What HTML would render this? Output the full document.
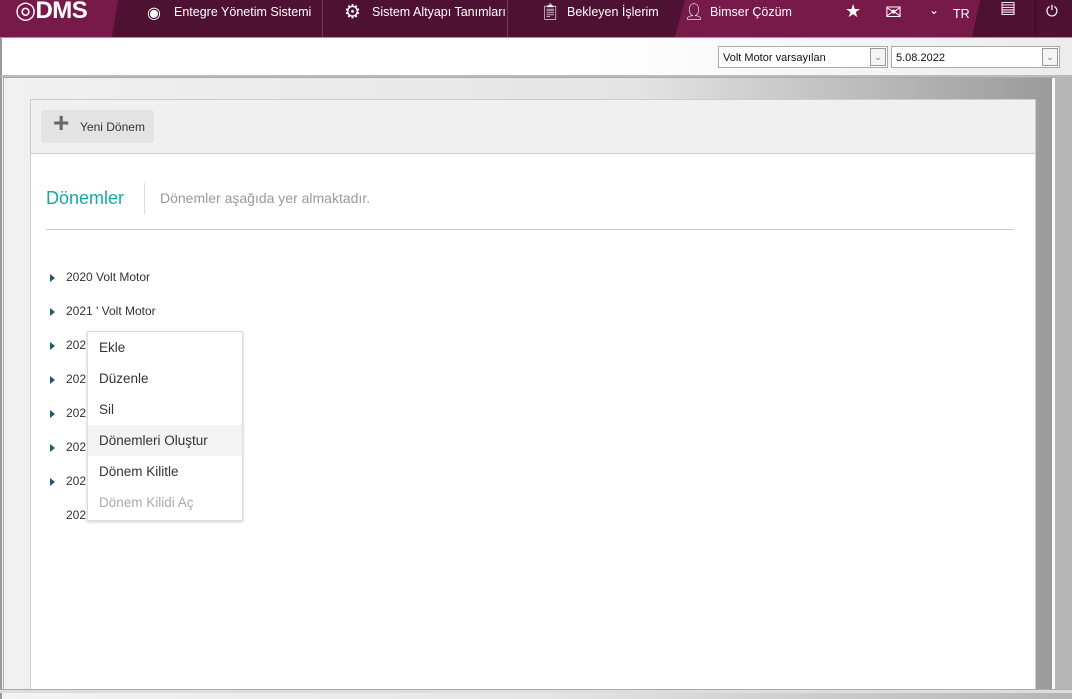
<!DOCTYPE html>
<html><head><meta charset="utf-8"><style>
*{margin:0;padding:0;box-sizing:border-box}
body{width:1072px;height:699px;overflow:hidden;font-family:"Liberation Sans","DejaVu Sans",sans-serif;background:#e9e9e9;position:relative}
.hdr{position:absolute;left:0;top:0;width:1072px;height:38px;background:#4e1131;border-bottom:1px solid #9a9a9a}
.abs{position:absolute}
.nav{position:absolute;top:5px;color:#fff;font-size:12.5px}
.sep{position:absolute;top:0;width:1px;height:37px;background:#6e3a55}
.sel{position:absolute;top:46px;height:22px;border:1px solid #aaa;background:#fff;font-size:11px;padding:5px 0 0 4px;color:#111}
.sel .b{position:absolute;right:1px;top:1px;width:16px;height:18px;border:1px solid #999;background:#f4f4f4;font-size:9px;color:#777;text-align:center;line-height:16px}
.tree{position:absolute;left:50px;font-size:12px;color:#333}
.tree i{display:inline-block;width:0;height:0;border-left:5px solid #1d5c6b;border-top:4.5px solid transparent;border-bottom:4.5px solid transparent;margin-right:11px;vertical-align:-1px}
.menu{position:absolute;left:87px;top:331px;width:156px;height:190px;background:#fff;border:1px solid #ddd;box-shadow:0 1px 3px rgba(0,0,0,.2)}
.menu div{height:31px;padding:8px 0 0 11px;font-size:13.5px;color:#333}
</style></head><body>
<div class="hdr">
 <div class="abs" style="left:0;top:0;width:118px;height:37px;background:#771a4a;clip-path:polygon(0 0,118px 0,112px 37px,0 37px)"></div>
 <div class="abs" style="left:675px;top:0;width:305px;height:37px;background:#771a4a;clip-path:polygon(10px 0,305px 0,297px 37px,0 37px)"></div>
 <div class="abs" style="left:15px;top:-4px;color:#fff;font-size:24px;font-weight:bold;letter-spacing:-0.5px">◎DMS</div>
 <div class="nav" style="left:147px;top:3px;font-size:16px;font-weight:bold">◉</div>
 <div class="nav" style="left:174px">Entegre Yönetim Sistemi</div>
 <div class="sep" style="left:322px"></div>
 <div class="nav" style="left:344px;top:1px;font-size:19px">⚙</div>
 <div class="nav" style="left:372px">Sistem Altyapı Tanımları</div>
 <div class="sep" style="left:507px"></div>
 <div class="nav" style="left:540px;top:2px;font-size:16px">📋︎</div>
 <div class="nav" style="left:567px">Bekleyen İşlerim</div>
 <div class="nav" style="left:684px;top:2px;font-size:16px">👤︎</div>
 <div class="nav" style="left:710px">Bimser Çözüm</div>
 <div class="nav" style="left:845px;top:1px;font-size:18px">★</div>
 <div class="nav" style="left:885px;top:0px;font-size:20px">✉</div>
 <div class="nav" style="left:929px;top:3px;font-size:12px">⌄</div>
 <div class="nav" style="left:953px;top:7px">TR</div>
 <div class="nav" style="left:1000px;top:-2px;font-size:17px">▤</div>
 <div class="sep" style="left:1035px;background:#3a0c24"></div>
 <div class="nav" style="left:1046px;top:3px;font-size:15px">⏻</div>
</div>
<div class="abs" style="left:0;top:38px;width:1072px;height:37px;background:linear-gradient(90deg,#fff 0,#fff 55%,#ececec 100%);border-left:2px solid #999"></div>
<div class="sel" style="left:718px;width:170px">Volt Motor varsayılan<span class="b">⌄</span></div>
<div class="sel" style="left:891px;width:169px">5.08.2022<span class="b">⌄</span></div>
<div class="abs" style="left:0;top:75px;width:1072px;height:624px;background:linear-gradient(90deg,#f3f3f3 0,#e6e6e6 50%,#b5b5b5 100%);border-top:2px solid #bbb;border-left:2px solid #999"></div>
<div class="abs" style="left:3px;top:77px;width:1052px;height:613px;border:1px solid #aaa;background:linear-gradient(90deg,#f1f1f1 0,#e4e4e4 60%,#9a9a9a 100%)"></div>
<div class="abs" style="left:1052px;top:78px;width:3px;height:612px;background:#fafafa"></div>
<div class="abs" style="left:0;top:689px;width:1072px;height:4px;background:#ddd;border-top:1px solid #aaa"></div>
<div class="abs" style="left:30px;top:99px;width:1006px;height:590px;background:#fff;border:1px solid #ccc;border-bottom:none">
 <div style="height:54px;background:#f0f0f0;border-bottom:1px solid #ccc;position:relative">
  <div class="abs" style="left:10px;top:10px;width:113px;height:33px;background:#e3e3e3;border-radius:3px">
   <span class="abs" style="left:12px;top:-3px;font-size:28px;color:#666;font-weight:bold">+</span>
   <span class="abs" style="left:39px;top:10px;font-size:12px;color:#333">Yeni Dönem</span>
  </div>
 </div>
 <div class="abs" style="left:15px;top:88px;font-size:18px;color:#17a9a9">Dönemler</div>
 <div class="abs" style="left:113px;top:83px;width:1px;height:31px;background:#ddd"></div>
 <div class="abs" style="left:129px;top:90px;font-size:14px;color:#999">Dönemler aşağıda yer almaktadır.</div>
 <div class="abs" style="left:15px;top:129px;width:968px;height:1px;background:#ccc"></div>
</div>
<div class="tree" style="top:270px"><i></i>2020 Volt Motor</div>
<div class="tree" style="top:304px"><i></i>2021 ' Volt Motor</div>
<div class="tree" style="top:338px"><i></i>202</div>
<div class="tree" style="top:372px"><i></i>202</div>
<div class="tree" style="top:406px"><i></i>202</div>
<div class="tree" style="top:440px"><i></i>202</div>
<div class="tree" style="top:474px"><i></i>202</div>
<div class="tree" style="top:508px;left:66px">202</div>
<div class="menu">
 <div>Ekle</div><div>Düzenle</div><div>Sil</div>
 <div style="background:#f3f3f3">Dönemleri Oluştur</div>
 <div>Dönem Kilitle</div><div style="color:#aaa">Dönem Kilidi Aç</div>
</div>
</body></html>
